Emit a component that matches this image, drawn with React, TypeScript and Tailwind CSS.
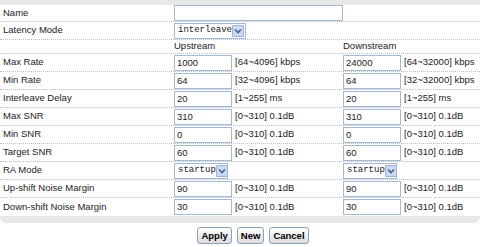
import React from 'react';

const font = { fontFamily: '"Liberation Sans", Arial, sans-serif' };
const mono = { fontFamily: '"Liberation Mono", "Courier New", monospace' };

const rows = [
  { label: 'Max Rate', up: '1000', upUnit: '[64~4096] kbps', down: '24000', downUnit: '[64~32000] kbps' },
  { label: 'Min Rate', up: '64', upUnit: '[32~4096] kbps', down: '64', downUnit: '[32~32000] kbps' },
  { label: 'Interleave Delay', up: '20', upUnit: '[1~255] ms', down: '20', downUnit: '[1~255] ms' },
  { label: 'Max SNR', up: '310', upUnit: '[0~310] 0.1dB', down: '310', downUnit: '[0~310] 0.1dB' },
  { label: 'Min SNR', up: '0', upUnit: '[0~310] 0.1dB', down: '0', downUnit: '[0~310] 0.1dB' },
  { label: 'Target SNR', up: '60', upUnit: '[0~310] 0.1dB', down: '60', downUnit: '[0~310] 0.1dB' },
];

const margins = [
  { label: 'Up-shift Noise Margin', up: '90', down: '90' },
  { label: 'Down-shift Noise Margin', up: '30', down: '30' },
];

const Row = ({
  label,
  h = 'h-[18px]',
  line = true,
  children,
}: {
  label: string;
  h?: string;
  line?: boolean;
  children?: React.ReactNode;
}) => (
  <div className={`flex items-center ${h} ${line ? 'border-b border-dotted border-[#bcbccc]' : ''}`}>
    <div className="w-[174px] shrink-0 pl-[3px] whitespace-nowrap">{label}</div>
    {children}
  </div>
);

const Field = ({ value, w = 'w-[58px]' }: { value: string; w?: string }) => (
  <div className={`${w} shrink-0 h-[16px] border border-[#a4b9d2] bg-white pl-[2px] leading-[14px]`}>{value}</div>
);

const Select = ({ value, w }: { value: string; w: string }) => (
  <div className={`${w} shrink-0 h-[16px] flex items-center justify-between border border-[#a4b9d2] bg-white pl-[3px] pr-[1px]`}>
    <span className="text-[9px] leading-none" style={mono}>
      {value}
    </span>
    <span className="w-[12px] h-[12px] shrink-0 flex items-center justify-center bg-[#c9d9f1] border border-[#9ab3d6] rounded-[1px]">
      <svg width="8" height="6" viewBox="0 0 8 6">
        <path d="M1 1.5 L4 4.5 L7 1.5" fill="none" stroke="#4d6185" strokeWidth="1.6" />
      </svg>
    </span>
  </div>
);

const Pair = ({ value, unit, last = false }: { value: string; unit: string; last?: boolean }) => (
  <div className={`${last ? 'flex-1' : 'w-[169px] shrink-0'} flex items-center whitespace-nowrap`}>
    <Field value={value} />
    <span className="pl-[3px]">{unit}</span>
  </div>
);

const Button = ({ children }: { children: React.ReactNode }) => (
  <button className="h-[17px] px-[3px] border border-[#8ba2be] rounded-[3px] bg-gradient-to-b from-white to-[#dcdcdc] font-bold text-[9.5px] leading-none text-black">
    {children}
  </button>
);

export default function App() {
  return (
    <div className="w-[480px] h-[247px] bg-white text-[9.5px] text-[#222]" style={font}>
      <div className="h-[5px] bg-[#e8e8e8]" />
      <Row label="Name" h="h-[17px]">
        <Field value="" w="w-[169px]" />
      </Row>
      <Row label="Latency Mode">
        <Select value="interleave" w="w-[72px]" />
      </Row>
      <Row label="" h="h-[14px]">
        <div className="w-[169px] shrink-0">Upstream</div>
        <div>Downstream</div>
      </Row>
      {rows.map((r) => (
        <Row key={r.label} label={r.label}>
          <Pair value={r.up} unit={r.upUnit} />
          <Pair value={r.down} unit={r.downUnit} last />
        </Row>
      ))}
      <Row label="RA Mode">
        <div className="w-[169px] shrink-0 flex">
          <Select value="startup" w="w-[54px]" />
        </div>
        <Select value="startup" w="w-[54px]" />
      </Row>
      {margins.map((r, i) => (
        <Row key={r.label} label={r.label} line={i === 0}>
          <Pair value={r.up} unit="[0~310] 0.1dB" />
          <Pair value={r.down} unit="[0~310] 0.1dB" last />
        </Row>
      ))}
      <div className="h-[7px] bg-[#e8e8e8] rounded-b-[6px]" />
      <div className="flex justify-center gap-[5px] pt-[4px] pl-[26px]">
        <Button>Apply</Button>
        <Button>New</Button>
        <Button>Cancel</Button>
      </div>
    </div>
  );
}
